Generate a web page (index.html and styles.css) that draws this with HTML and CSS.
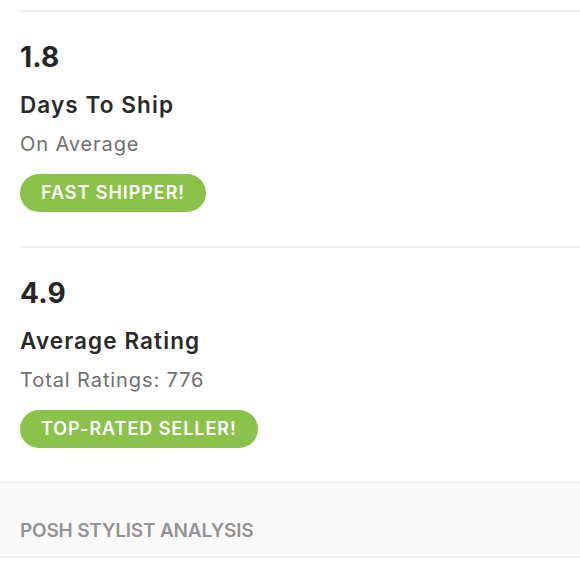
FILE: index.html
```html
<!DOCTYPE html>
<html>
<head>
<meta charset="utf-8">
<link rel="stylesheet" href="styles.css">
</head>
<body>
  <div class="stats">
    <section class="stat">
      <div class="stat-value">1.8</div>
      <div class="stat-title">Days To Ship</div>
      <div class="stat-sub">On Average</div>
      <span class="badge">FAST SHIPPER!</span>
    </section>
    <section class="stat">
      <div class="stat-value">4.9</div>
      <div class="stat-title">Average Rating</div>
      <div class="stat-sub">Total Ratings: 776</div>
      <span class="badge">TOP-RATED SELLER!</span>
    </section>
  </div>
  <div class="band">
    <h2 class="band-title">POSH STYLIST ANALYSIS</h2>
  </div>
</body>
</html>
```
FILE: styles.css
```css
html, body {
  margin: 0;
  padding: 0;
  background: #ffffff;
}
body {
  font-family: "Inter", "Open Sans", sans-serif;
  color: #2a2a2a;
  padding-top: 10px;
}
.stats {
  padding-left: 20px;
}
.stat {
  border-top: 2px solid #f0f0f0;
  padding-top: 28px;
  padding-bottom: 34px;
  display: flex;
  flex-direction: column;
  align-items: flex-start;
}
.stat-value {
  font-size: 28px;
  font-weight: 700;
  line-height: 34px;
  color: #262626;
  letter-spacing: 0.2px;
}
.stat-title {
  margin-top: 17px;
  font-size: 22.5px;
  font-weight: 600;
  line-height: 28px;
  color: #2a2a2a;
  letter-spacing: 1.1px;
}
.stat-sub {
  margin-top: 12px;
  font-size: 20px;
  line-height: 26px;
  color: #707070;
  letter-spacing: 0.9px;
}
.badge {
  margin-top: 17px;
  height: 38px;
  line-height: 38px;
  padding: 0 21px;
  border-radius: 19px;
  background: #8bc34a;
  color: #ffffff;
  font-size: 18px;
  font-weight: 600;
  letter-spacing: 0.95px;
}
.band {
  background: #fbfafa;
  border-top: 1px solid #f0efef;
  border-bottom: 1px solid #ececec;
  height: 73px;
  display: flex;
  align-items: flex-end;
  padding-left: 20px;
}
.band-title {
  margin: 0 0 12px 0;
  font-size: 19px;
  font-weight: 600;
  line-height: 26px;
  color: #949494;
  letter-spacing: -0.2px;
}
```
